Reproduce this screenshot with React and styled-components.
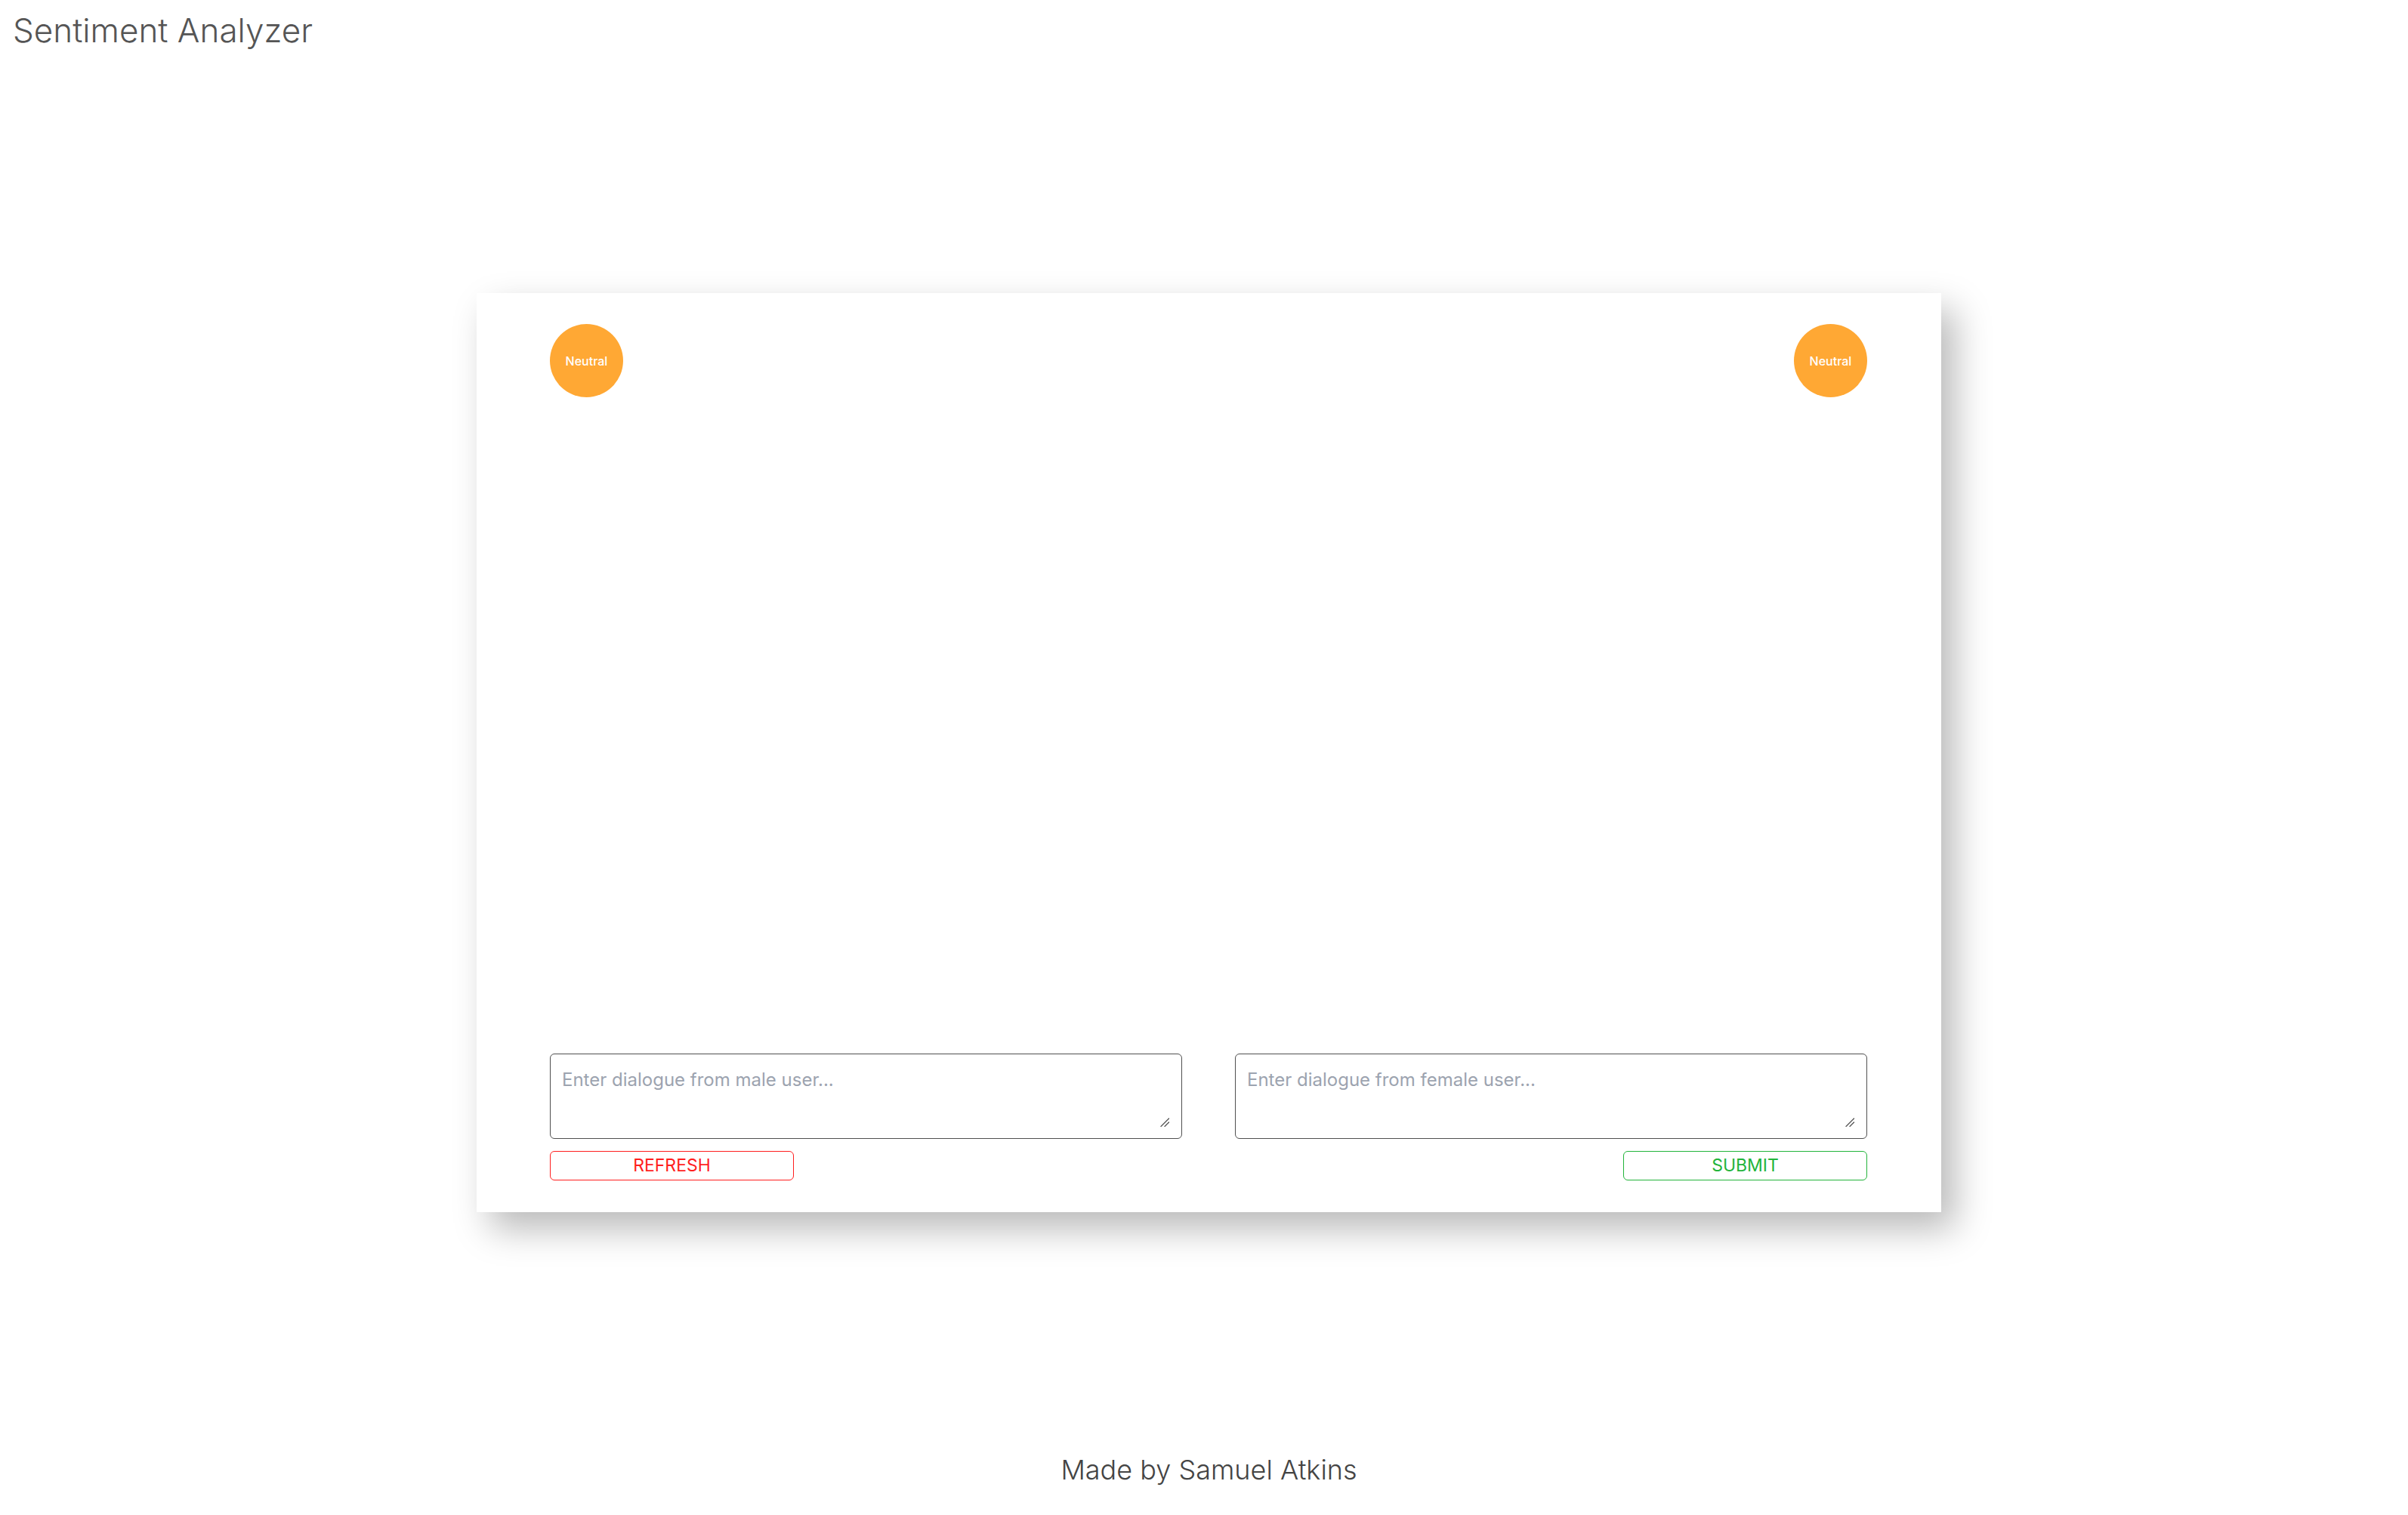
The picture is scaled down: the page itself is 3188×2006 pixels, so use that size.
import React from "react";
import styled, { createGlobalStyle } from "styled-components";

const GlobalStyle = createGlobalStyle`
  html, body {
    background: #ffffff;
  }
  body {
    margin: 8px;
    font-family: Inter, "Noto Sans", "Liberation Sans", sans-serif;
    color: #444;
  }
  * { box-sizing: border-box; }
`;

const Header = styled.header`
  padding: 6px 0 0 9px;
`;

const Title = styled.h1`
  margin: 0;
  font-size: 44px;
  font-weight: 300;
  line-height: 1.21;
  color: #555;
`;

const Main = styled.main`
  display: flex;
  flex-direction: column;
  align-items: center;
  padding: 321px 0 0 13px;
`;

const Card = styled.section`
  width: 1939px;
  height: 1217px;
  background: #fff;
  box-shadow: 18px 22px 45px rgba(0, 0, 0, 0.28);
  padding: 41px 98px 42px 97px;
  display: flex;
  flex-direction: column;
`;

const BadgeRow = styled.div`
  display: flex;
  justify-content: space-between;
  align-items: center;
`;

const Badge = styled.div`
  width: 97px;
  height: 97px;
  border-radius: 50%;
  background: #ffa834;
  color: #fff;
  display: flex;
  align-items: center;
  justify-content: center;
  font-size: 16px;
  font-weight: 500;
`;

const ChatArea = styled.div`
  flex: 1;
`;

const InputGrid = styled.div`
  display: grid;
  grid-template-columns: 1fr 1fr;
  column-gap: 70px;
`;

const InputColumn = styled.div`
  display: flex;
  flex-direction: column;
  align-items: ${(p) => (p.$align === "right" ? "flex-end" : "flex-start")};
  gap: 16px;
`;

const FieldWrap = styled.div`
  position: relative;
  width: 100%;
  height: 113px;
`;

const Dialogue = styled.textarea`
  display: block;
  width: 100%;
  height: 100%;
  border: 1.5px solid #505050;
  border-radius: 6px;
  padding: 19px 15px 15px;
  font-family: Inter, "Noto Sans", sans-serif;
  font-size: 24px;
  color: #333;
  background: #fff;
  outline: none;
  resize: none;
  &::placeholder {
    color: #9ca3af;
  }
`;

const Grip = styled.svg`
  position: absolute;
  right: 17px;
  bottom: 16px;
  width: 12px;
  height: 12px;
  pointer-events: none;
`;

const ActionButton = styled.button`
  width: 323px;
  height: 39px;
  background: #fff;
  border: 1.5px solid ${(p) => p.$color};
  color: ${(p) => p.$color};
  border-radius: 6px;
  font-family: Inter, "Noto Sans", sans-serif;
  font-size: 23px;
  font-weight: 400;
  line-height: 1;
  cursor: pointer;
  padding: 0;
`;

const Footer = styled.footer`
  margin-top: 320px;
  font-size: 36px;
  font-weight: 300;
  line-height: 1.21;
  color: #444;
`;

function ResizeGrip() {
  return (
    <Grip viewBox="0 0 12 12">
      <path d="M1 11.5 L11.5 1" stroke="#555" strokeWidth="1.3" strokeLinecap="round" />
      <path d="M6 11.5 L11.5 6" stroke="#555" strokeWidth="1.3" strokeLinecap="round" />
    </Grip>
  );
}

export default function App() {
  return (
    <>
      <GlobalStyle />
      <Header>
        <Title>Sentiment Analyzer</Title>
      </Header>
      <Main>
        <Card>
          <BadgeRow>
            <Badge>Neutral</Badge>
            <Badge>Neutral</Badge>
          </BadgeRow>
          <ChatArea />
          <InputGrid>
            <InputColumn $align="left">
              <FieldWrap>
                <Dialogue placeholder="Enter dialogue from male user..." />
                <ResizeGrip />
              </FieldWrap>
              <ActionButton $color="#ff1f1f">REFRESH</ActionButton>
            </InputColumn>
            <InputColumn $align="right">
              <FieldWrap>
                <Dialogue placeholder="Enter dialogue from female user..." />
                <ResizeGrip />
              </FieldWrap>
              <ActionButton $color="#22b43a">SUBMIT</ActionButton>
            </InputColumn>
          </InputGrid>
        </Card>
        <Footer>Made by Samuel Atkins</Footer>
      </Main>
    </>
  );
}
